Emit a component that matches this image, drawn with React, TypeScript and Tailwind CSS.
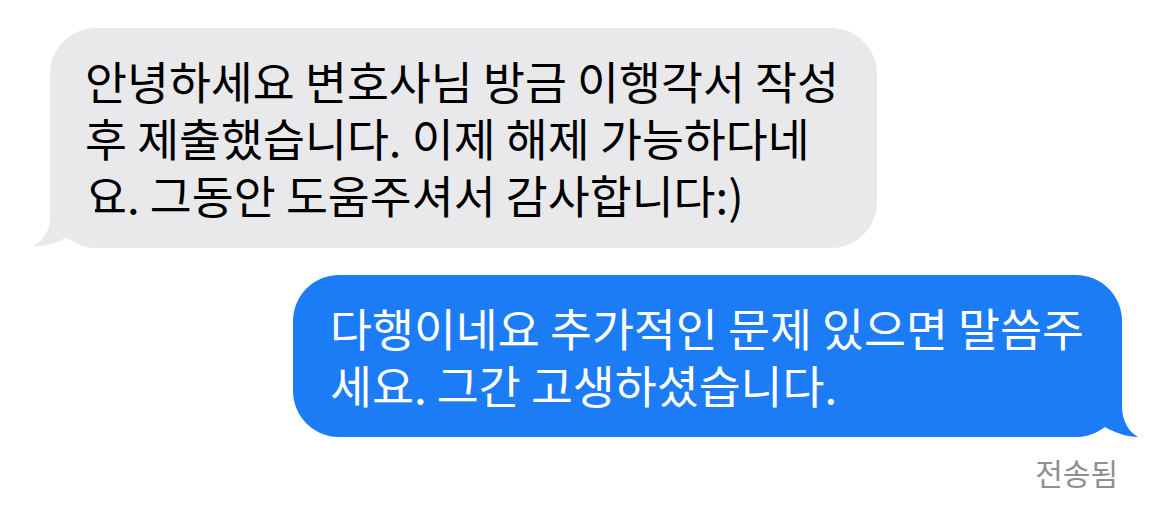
export default function App() {
  const font = { fontFamily: '"Noto Sans CJK KR", "Noto Sans", sans-serif' }

  return (
    <div className="w-[1170px] h-[524px] bg-white overflow-hidden" style={font}>
      <div className="flex flex-col pt-[28px]">
        {/* received */}
        <div className="relative ml-[50px] w-[827px] rounded-[46px] bg-[#e9e9eb] pl-[35px] py-6 pb-[25px] text-[45.6px] leading-[57px] text-black whitespace-nowrap">
          <div>안녕하세요 변호사님 방금 이행각서 작성</div>
          <div>후 제출했습니다. 이제 해제 가능하다네</div>
          <div>요. 그동안 도움주셔서 감사합니다:)</div>
          <svg className="absolute left-[-20px] bottom-0" width="70" height="50" viewBox="0 0 70 50">
            <path d="M20 0 L20 18 C20 34 13 43 3 48 C14 49 27 45 37 39 C45 45 53 49 65 50 L65 0 Z" fill="#e9e9eb" />
          </svg>
        </div>

        {/* sent */}
        <div className="relative ml-[293px] mt-[27px] w-[829px] rounded-[46px] bg-[#1b7cf5] pl-[37px] py-6 text-[45.6px] leading-[57px] text-white whitespace-nowrap">
          <div>다행이네요 추가적인 문제 있으면 말씀주</div>
          <div>세요. 그간 고생하셨습니다.</div>
          <svg className="absolute right-[-20px] bottom-0" width="70" height="50" viewBox="0 0 70 50">
            <path d="M50 0 L50 18 C50 34 56 44 66 50 C56 50 43 46 33 40 C25 45 17 49 5 50 L5 0 Z" fill="#1b7cf5" />
          </svg>
        </div>

        <div className="mt-[17px] w-[1118px] text-right text-[30px] leading-[36px] text-[#8e8e93]">전송됨</div>
      </div>
    </div>
  )
}
